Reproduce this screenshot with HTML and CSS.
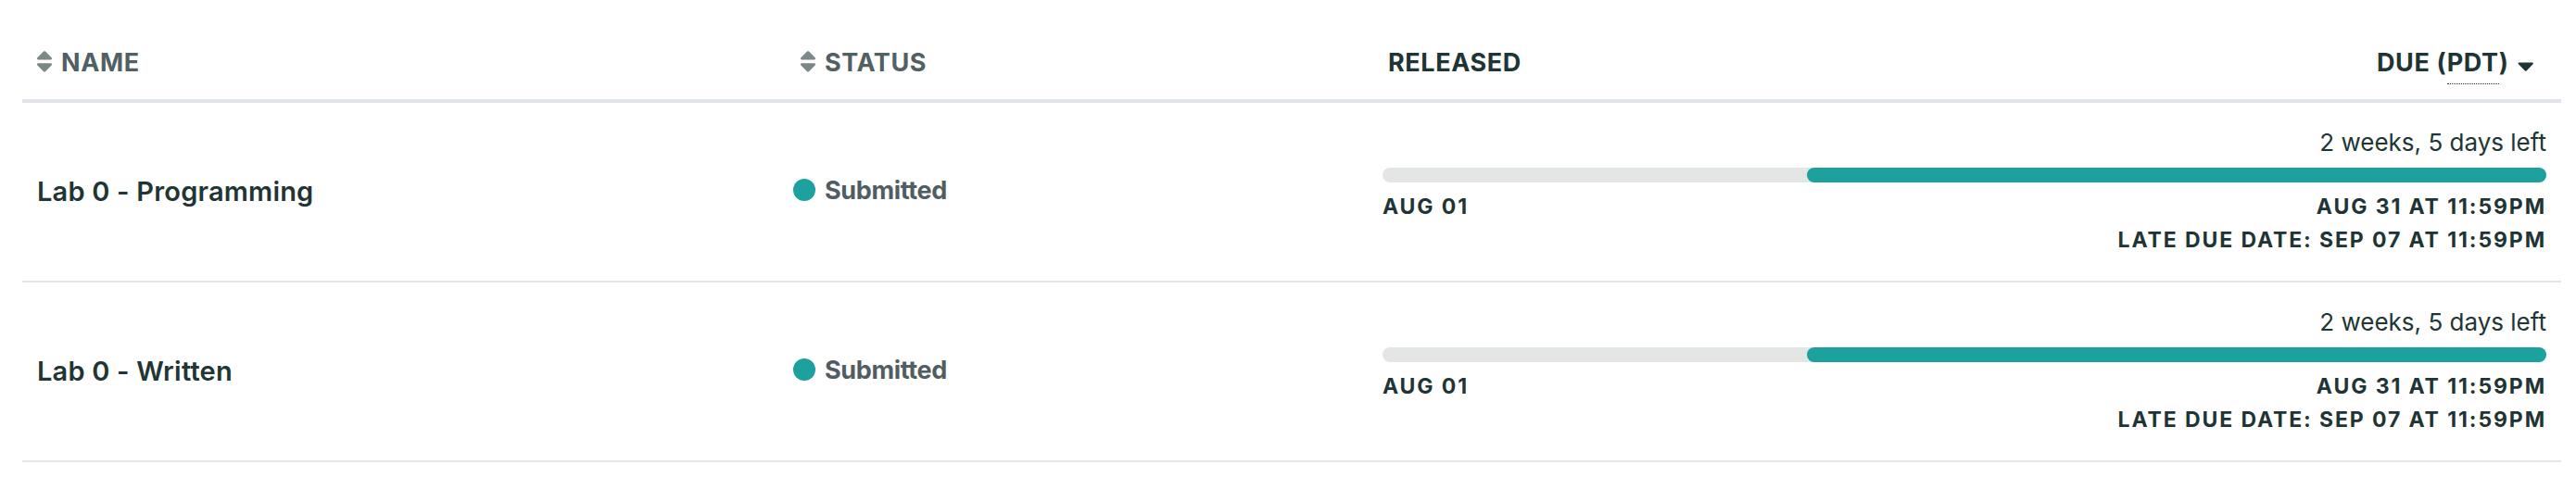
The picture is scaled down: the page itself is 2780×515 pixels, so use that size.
FILE: index.html
```html
<!DOCTYPE html>
<html lang="en">
<head>
<meta charset="utf-8">
<title>Assignments</title>
<link rel="stylesheet" href="styles.css">
</head>
<body>
<div class="assignments">
  <div class="row row--head">
    <div class="th th--name">
      <svg class="sort-icon" viewBox="0 0 320 512" aria-hidden="true"><path d="M41 288h238c21.4 0 32.1 25.9 17 41L177 448c-9.4 9.4-24.6 9.4-33.9 0L24 329c-15.1-15.1-4.4-41 17-41zm255-105L177 64c-9.4-9.4-24.6-9.4-33.9 0L24 183c-15.1 15.1-4.4 41 17 41h238c21.4 0 32.1-25.9 17-41z"/></svg>
      <span>Name</span>
    </div>
    <div class="th th--status">
      <svg class="sort-icon" viewBox="0 0 320 512" aria-hidden="true"><path d="M41 288h238c21.4 0 32.1 25.9 17 41L177 448c-9.4 9.4-24.6 9.4-33.9 0L24 329c-15.1-15.1-4.4-41 17-41zm255-105L177 64c-9.4-9.4-24.6-9.4-33.9 0L24 183c-15.1 15.1-4.4 41 17 41h238c21.4 0 32.1-25.9 17-41z"/></svg>
      <span>Status</span>
    </div>
    <div class="th th--time">
      <span>Released</span>
      <span class="due-head"><span>Due (<abbr class="tz" title="Pacific Daylight Time">PDT</abbr>)</span><svg class="caret" viewBox="0 0 320 512" aria-hidden="true"><path d="M31.3 192h257.3c17.8 0 26.7 21.5 14.1 34.1L174.1 354.8c-7.8 7.8-20.5 7.8-28.3 0L17.2 226.1C4.6 213.5 13.5 192 31.3 192z"/></svg></span>
    </div>
  </div>

  <div class="row row--item">
    <div class="td td--name">Lab 0 - Programming</div>
    <div class="td td--status"><span class="dot"></span>Submitted</div>
    <div class="td td--time">
      <div class="time-left">2 weeks, 5 days left</div>
      <div class="track"><div class="fill" style="margin-left:36.46%;width:63.54%"></div></div>
      <div class="dates">
        <div class="date">Aug 01</div>
        <div class="due-dates">
          <div class="date">Aug 31 at 11:59PM</div>
          <div class="date">Late Due Date: Sep 07 at 11:59PM</div>
        </div>
      </div>
    </div>
  </div>

  <div class="row row--item">
    <div class="td td--name">Lab 0 - Written</div>
    <div class="td td--status"><span class="dot"></span>Submitted</div>
    <div class="td td--time">
      <div class="time-left">2 weeks, 5 days left</div>
      <div class="track"><div class="fill" style="margin-left:36.46%;width:63.54%"></div></div>
      <div class="dates">
        <div class="date">Aug 01</div>
        <div class="due-dates">
          <div class="date">Aug 31 at 11:59PM</div>
          <div class="date">Late Due Date: Sep 07 at 11:59PM</div>
        </div>
      </div>
    </div>
  </div>
</div>
</body>
</html>
```

FILE: styles.css
```css
* { box-sizing: border-box; }

body {
  margin: 0;
  background: #ffffff;
  font-family: Inter, Lato, "Liberation Sans", sans-serif;
  color: #1f3434;
}

.assignments {
  margin: 0 16px 0 24px;
}

.row {
  display: grid;
  grid-template-columns: 816px 636px 1fr;
}

.row--head {
  height: 111px;
  padding-top: 28px;
  border-bottom: 4px solid #e1e3ea;
  align-items: center;
}

.row--item {
  height: 194px;
  border-bottom: 2px solid #e3e5e9;
  align-items: center;
}

.th {
  display: flex;
  align-items: center;
  font-size: 27px;
  font-weight: 700;
  text-transform: uppercase;
  letter-spacing: 0.6px;
  color: #525f63;
}

.th--name { padding-left: 15px; }
.th--status { padding-left: 23px; }

.th--time {
  justify-content: space-between;
  padding: 0 30px 0 22px;
  color: #1f3434;
}

.sort-icon {
  width: 18px;
  height: 28.8px;
  margin: 0 9px 2px 0;
  fill: #7c8887;
  flex: none;
}

.due-head {
  display: flex;
  align-items: center;
}

.tz {
  text-decoration: none;
  padding-bottom: 6px;
  border-bottom: 1px dotted #1f3434;
}

.caret {
  width: 17.5px;
  height: 28px;
  margin: 6px 0 0 9px;
  fill: #1f3434;
  flex: none;
}

.td--name {
  padding: 0 0 2px 16px;
  font-size: 29px;
  font-weight: 600;
  letter-spacing: 0.2px;
  color: #213535;
}

.td--status {
  display: flex;
  align-items: center;
  padding: 0 0 4px 16px;
  font-size: 27px;
  font-weight: 700;
  letter-spacing: -0.35px;
  color: #505d62;
}

.dot {
  width: 24px;
  height: 24px;
  border-radius: 50%;
  background: #1ca19f;
  margin-right: 10px;
  flex: none;
}

.td--time {
  align-self: stretch;
  display: flex;
  flex-direction: column;
  padding: 27px 16px 0 16px;
}

.time-left {
  text-align: right;
  font-size: 26px;
  line-height: 32px;
  color: #213535;
}

.track {
  display: flex;
  height: 16px;
  margin-top: 11px;
  border-radius: 8px;
  background: #e4e6e5;
}

.fill {
  height: 16px;
  border-radius: 8px;
  background: #1ca19f;
}

.dates {
  display: flex;
  justify-content: space-between;
  margin-top: 8px;
}

.due-dates {
  text-align: right;
}

.date {
  font-size: 23px;
  line-height: 36px;
  font-weight: 700;
  text-transform: uppercase;
  letter-spacing: 1.9px;
  color: #1f3434;
}
```
